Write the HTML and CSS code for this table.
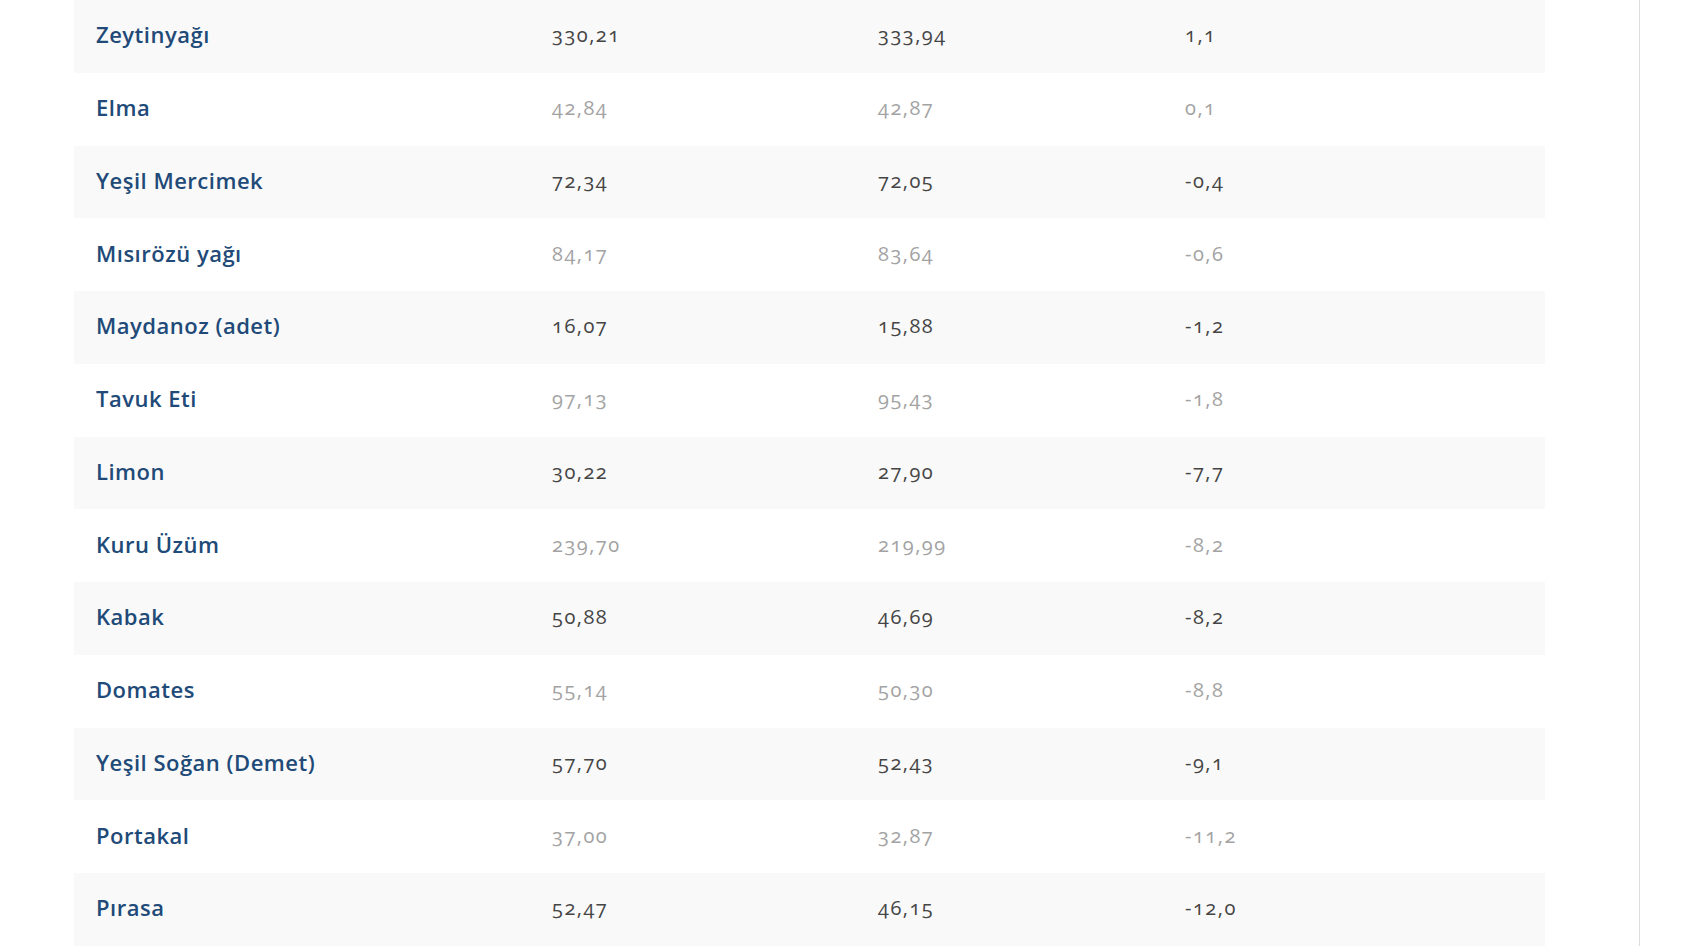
FILE: index.html
```html
<!DOCTYPE html>
<html lang="tr">
<head>
<meta charset="utf-8">
<title>Fiyatlar</title>
<link rel="stylesheet" href="styles.css">
</head>
<body>
<div class="page">
  <table class="prices">
    <colgroup>
      <col class="c-name"><col class="c-num1"><col class="c-num2"><col class="c-num3">
    </colgroup>
    <tbody>
      <tr><td class="name">Zeytinyağı</td><td>330,21</td><td>333,94</td><td>1,1</td></tr>
      <tr><td class="name">Elma</td><td>42,84</td><td>42,87</td><td>0,1</td></tr>
      <tr><td class="name">Yeşil Mercimek</td><td>72,34</td><td>72,05</td><td>-0,4</td></tr>
      <tr><td class="name">Mısırözü yağı</td><td>84,17</td><td>83,64</td><td>-0,6</td></tr>
      <tr><td class="name">Maydanoz (adet)</td><td>16,07</td><td>15,88</td><td>-1,2</td></tr>
      <tr><td class="name">Tavuk Eti</td><td>97,13</td><td>95,43</td><td>-1,8</td></tr>
      <tr><td class="name">Limon</td><td>30,22</td><td>27,90</td><td>-7,7</td></tr>
      <tr><td class="name">Kuru Üzüm</td><td>239,70</td><td>219,99</td><td>-8,2</td></tr>
      <tr><td class="name">Kabak</td><td>50,88</td><td>46,69</td><td>-8,2</td></tr>
      <tr><td class="name">Domates</td><td>55,14</td><td>50,30</td><td>-8,8</td></tr>
      <tr><td class="name">Yeşil Soğan (Demet)</td><td>57,70</td><td>52,43</td><td>-9,1</td></tr>
      <tr><td class="name">Portakal</td><td>37,00</td><td>32,87</td><td>-11,2</td></tr>
      <tr><td class="name">Pırasa</td><td>52,47</td><td>46,15</td><td>-12,0</td></tr>
    </tbody>
  </table>
</div>
</body>
</html>
```

FILE: styles.css
```css
html, body {
  margin: 0;
  padding: 0;
  background: #ffffff;
  height: 100%;
  overflow: hidden;
}
body {
  font-family: "Open Sans", "Lato", "Liberation Sans", sans-serif;
}
.page {
  width: 1565px;
  min-height: 946px;
  padding-left: 74px;
  border-right: 1px solid #dcdcdc;
  box-sizing: content-box;
}
.prices {
  width: 1471px;
  border-collapse: collapse;
  table-layout: fixed;
}
.c-name { width: 456px; }
.c-num1 { width: 326px; }
.c-num2 { width: 307px; }
.c-num3 { width: auto; }
.prices tr {
  height: 72.75px;
}
.prices tr:nth-child(odd) {
  background: #f9f9f9;
}
.prices td {
  padding: 0 0 3px 22px;
  vertical-align: middle;
  font-size: 20px;
  color: #454545;
  letter-spacing: 1.5px;
  font-variant-numeric: oldstyle-nums;
}
.prices tr:nth-child(even) td {
  color: #a3a3a3;
}
.prices td.name,
.prices tr:nth-child(even) td.name {
  font-size: 22px;
  font-weight: 600;
  color: #214a78;
  letter-spacing: 0.5px;
  padding-bottom: 4px;
}
```
